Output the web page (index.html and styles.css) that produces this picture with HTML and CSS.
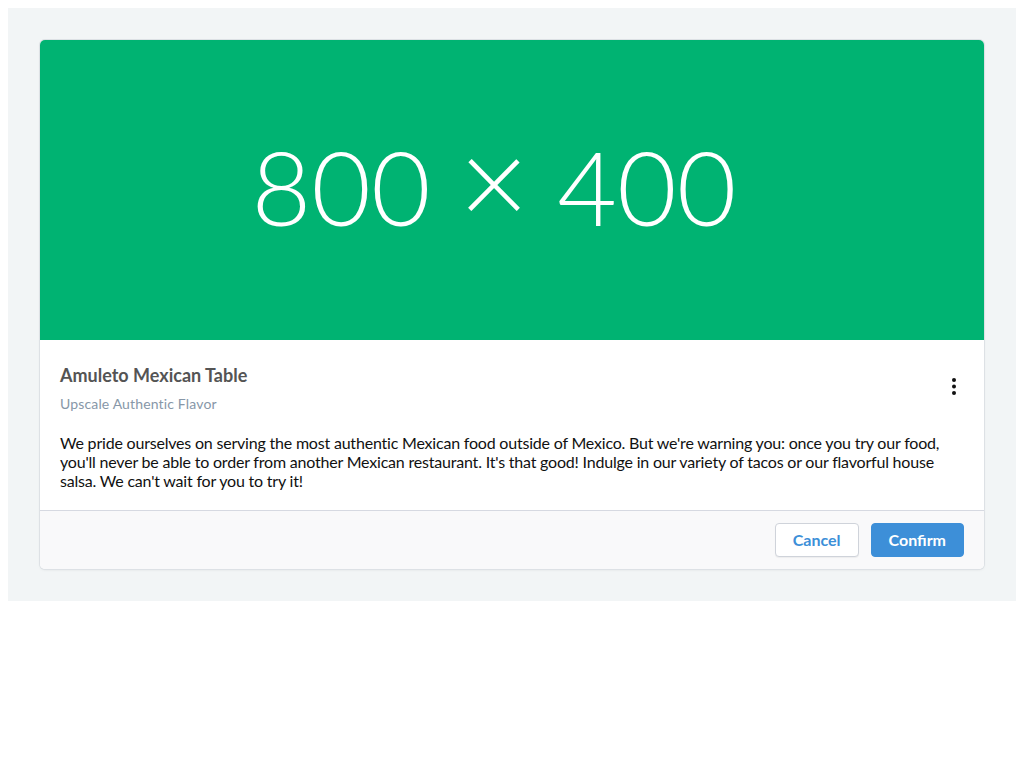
FILE: index.html
```html
<!DOCTYPE html>
<html lang="en">
<head>
<meta charset="utf-8">
<title>Amuleto Mexican Table</title>
<link rel="stylesheet" href="styles.css">
</head>
<body>
<div class="page">
  <div class="card">
    <div class="card-image"><span class="placeholder">800 <span class="times">×</span> 400</span></div>
    <div class="card-body">
      <div class="card-header">
        <div class="titles">
          <h2 class="title">Amuleto Mexican Table</h2>
          <p class="subtitle">Upscale Authentic Flavor</p>
        </div>
        <button class="menu" aria-label="More options">
          <svg width="20" height="20" viewBox="0 0 20 20"><circle cx="10" cy="4" r="2"/><circle cx="10" cy="10.5" r="2"/><circle cx="10" cy="17" r="2"/></svg>
        </button>
      </div>
      <p class="description">We pride ourselves on serving the most authentic Mexican food outside of Mexico. But we're warning you: once you try our food, you'll never be able to order from another Mexican restaurant. It's that good! Indulge in our variety of tacos or our flavorful house salsa. We can't wait for you to try it!</p>
    </div>
    <div class="card-footer">
      <button class="btn btn-secondary">Cancel</button>
      <button class="btn btn-primary">Confirm</button>
    </div>
  </div>
</div>
</body>
</html>
```

FILE: styles.css
```css
body {
  margin: 8px;
  font-family: Lato, "Liberation Sans", sans-serif;
  background: #fff;
}
.page {
  background: #f2f5f6;
  padding: 32px;
}
.card {
  background: #fff;
  border-radius: 5px;
  overflow: hidden;
  box-shadow: 0 0 0 1px #dde1e5, 0 1px 3px rgba(0, 0, 0, 0.08);
}
.card-image {
  height: 300px;
  box-sizing: border-box;
  padding: 0 36px 8px 0;
  background: #00b372;
  display: flex;
  align-items: center;
  justify-content: center;
}
.placeholder {
  color: #fff;
  font-family: Lato, sans-serif;
  font-weight: 300;
  font-size: 103px;
  line-height: 1;
  white-space: nowrap;
}
.times {
  font-size: 118%;
  line-height: 0;
}
.card-body {
  padding: 24px 20px 20px;
}
.card-header {
  display: flex;
  justify-content: space-between;
  align-items: flex-start;
}
.title {
  margin: 0;
  font-size: 18px;
  line-height: 22px;
  font-weight: 700;
  color: #545454;
}
.subtitle {
  margin: 9px 0 0;
  font-size: 14px;
  line-height: 17px;
  letter-spacing: 0.15px;
  color: #8797a8;
}
.menu {
  margin: 12px 0 0;
  padding: 0;
  border: 0;
  background: none;
  width: 20px;
  height: 20px;
  display: flex;
}
.menu svg { fill: #111; }
.description {
  margin: 21px 0 0;
  font-size: 16px;
  line-height: 19px;
  letter-spacing: -0.2px;
  color: #111;
}
.card-footer {
  border-top: 1px solid #d6d9e1;
  background: #f9f9fa;
  padding: 12px 20px;
  display: flex;
  justify-content: flex-end;
  gap: 12px;
}
.btn {
  height: 34px;
  padding: 0 17px 2px;
  border-radius: 4px;
  font-family: Lato, sans-serif;
  font-weight: 700;
  font-size: 16px;
  border: 1px solid transparent;
  cursor: pointer;
}
.btn-secondary {
  background: #fff;
  color: #3c8fd8;
  border-color: #cfd3da;
  box-shadow: 0 1px 1px rgba(0, 0, 0, 0.05);
}
.btn-primary {
  background: #3d8fd8;
  border-color: #3d8fd8;
  color: #fff;
}
```
